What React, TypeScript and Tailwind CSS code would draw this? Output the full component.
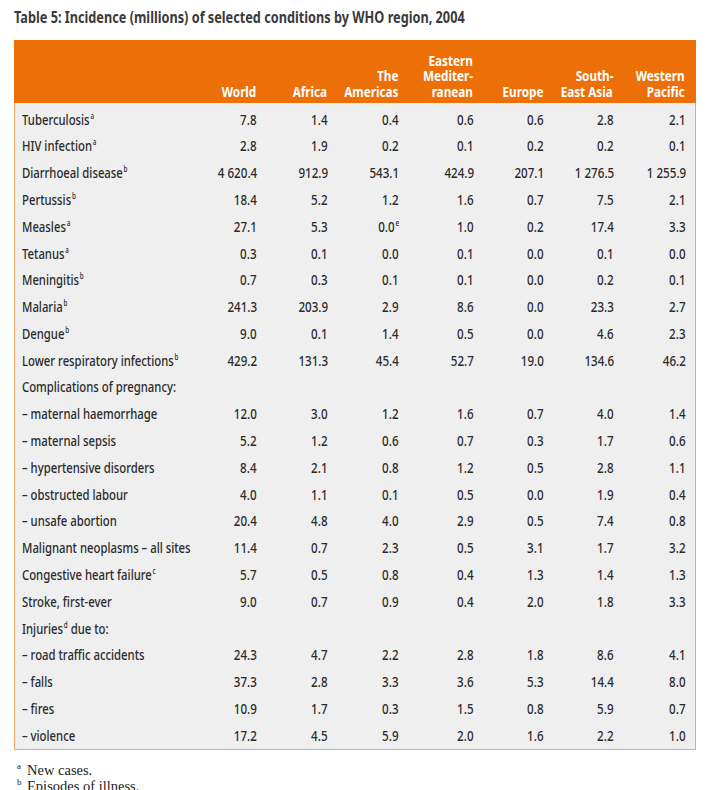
import React from 'react';

type Row = { label: string; sup?: string; tail?: string; values?: string[]; cellSup?: Record<number, string> };

const COLS = [
  ['World'],
  ['Africa'],
  ['The', 'Americas'],
  ['Eastern', 'Mediter-', 'ranean'],
  ['Europe'],
  ['South-', 'East Asia'],
  ['Western', 'Pacific'],
];

const ROWS: Row[] = [
  { label: 'Tuberculosis', sup: 'a', values: ['7.8', '1.4', '0.4', '0.6', '0.6', '2.8', '2.1'] },
  { label: 'HIV infection', sup: 'a', values: ['2.8', '1.9', '0.2', '0.1', '0.2', '0.2', '0.1'] },
  { label: 'Diarrhoeal disease', sup: 'b', values: ['4 620.4', '912.9', '543.1', '424.9', '207.1', '1 276.5', '1 255.9'] },
  { label: 'Pertussis', sup: 'b', values: ['18.4', '5.2', '1.2', '1.6', '0.7', '7.5', '2.1'] },
  { label: 'Measles', sup: 'a', values: ['27.1', '5.3', '0.0', '1.0', '0.2', '17.4', '3.3'], cellSup: { 2: 'e' } },
  { label: 'Tetanus', sup: 'a', values: ['0.3', '0.1', '0.0', '0.1', '0.0', '0.1', '0.0'] },
  { label: 'Meningitis', sup: 'b', values: ['0.7', '0.3', '0.1', '0.1', '0.0', '0.2', '0.1'] },
  { label: 'Malaria', sup: 'b', values: ['241.3', '203.9', '2.9', '8.6', '0.0', '23.3', '2.7'] },
  { label: 'Dengue', sup: 'b', values: ['9.0', '0.1', '1.4', '0.5', '0.0', '4.6', '2.3'] },
  { label: 'Lower respiratory infections', sup: 'b', values: ['429.2', '131.3', '45.4', '52.7', '19.0', '134.6', '46.2'] },
  { label: 'Complications of pregnancy:' },
  { label: '– maternal haemorrhage', values: ['12.0', '3.0', '1.2', '1.6', '0.7', '4.0', '1.4'] },
  { label: '– maternal sepsis', values: ['5.2', '1.2', '0.6', '0.7', '0.3', '1.7', '0.6'] },
  { label: '– hypertensive disorders', values: ['8.4', '2.1', '0.8', '1.2', '0.5', '2.8', '1.1'] },
  { label: '– obstructed labour', values: ['4.0', '1.1', '0.1', '0.5', '0.0', '1.9', '0.4'] },
  { label: '– unsafe abortion', values: ['20.4', '4.8', '4.0', '2.9', '0.5', '7.4', '0.8'] },
  { label: 'Malignant neoplasms – all sites', values: ['11.4', '0.7', '2.3', '0.5', '3.1', '1.7', '3.2'] },
  { label: 'Congestive heart failure', sup: 'c', values: ['5.7', '0.5', '0.8', '0.4', '1.3', '1.4', '1.3'] },
  { label: 'Stroke, first-ever', values: ['9.0', '0.7', '0.9', '0.4', '2.0', '1.8', '3.3'] },
  { label: 'Injuries', sup: 'd', tail: ' due to:' },
  { label: '– road traffic accidents', values: ['24.3', '4.7', '2.2', '2.8', '1.8', '8.6', '4.1'] },
  { label: '– falls', values: ['37.3', '2.8', '3.3', '3.6', '5.3', '14.4', '8.0'] },
  { label: '– fires', values: ['10.9', '1.7', '0.3', '1.5', '0.8', '5.9', '0.7'] },
  { label: '– violence', values: ['17.2', '4.5', '5.9', '2.0', '1.6', '2.2', '1.0'] },
];

const GRID = 'grid grid-cols-[171px_71px_71px_71px_75px_70px_70px_72px] pr-[10px]';
const sans = { fontFamily: '"Noto Sans", "DejaVu Sans", sans-serif' };

function Sup({ c }: { c: string }) {
  return <span className="align-super text-[8px] leading-none ml-[1px]">{c}</span>;
}

export default function App() {
  return (
    <div className="w-[723px] h-[790px] bg-white overflow-hidden text-[#2a2a2a]" style={sans}>
      <div className="pl-[14px] pt-[5px] h-[40px] whitespace-nowrap">
        <span className="inline-block origin-left scale-x-[0.77] text-[16.5px] font-bold text-[#3a3a3a]">
          Table 5: Incidence (millions) of selected conditions by WHO region, 2004
        </span>
      </div>
      <div className="ml-[14px] w-[682px]">
        <div className={`${GRID} bg-[#ed6f08] text-white font-bold text-[15px] leading-[15.5px] h-[63px] items-end pb-[4px]`}>
          <div />
          {COLS.map((lines, i) => (
            <div key={i} className="flex flex-col items-end whitespace-nowrap">
              {lines.map((l) => (
                <span key={l} className="origin-right scale-x-[0.78]">{l}</span>
              ))}
            </div>
          ))}
        </div>
        <div className="border border-t-0 border-[#f2a469] bg-[#efefef] pt-[3px]">
          {ROWS.map((r, ri) => (
            <div key={ri} className={`${GRID} -mr-px h-[26.8px] items-center text-[14.5px] font-medium`}>
              <div className="pl-[7px] whitespace-nowrap">
                <span className="inline-block origin-left scale-x-[0.78]">
                  {r.label}
                  {r.sup && <Sup c={r.sup} />}
                  {r.tail}
                </span>
              </div>
              {(r.values ?? []).map((v, ci) => (
                <div key={ci} className="text-right whitespace-nowrap">
                  <span className="inline-block origin-right scale-x-[0.8]">
                    {v}
                    {r.cellSup?.[ci] && <Sup c={r.cellSup[ci]} />}
                  </span>
                </div>
              ))}
            </div>
          ))}
        </div>
      </div>
      <div className="pl-[17px] pt-[12px] text-[14.5px] leading-[16px] text-[#222]" style={{ fontFamily: '"Liberation Serif", serif' }}>
        <div className="flex">
          <span className="w-[10px] text-[9px] leading-[9px]">a</span>New cases.
        </div>
        <div className="flex">
          <span className="w-[10px] text-[9px] leading-[9px]">b</span>Episodes of illness.
        </div>
      </div>
    </div>
  );
}
